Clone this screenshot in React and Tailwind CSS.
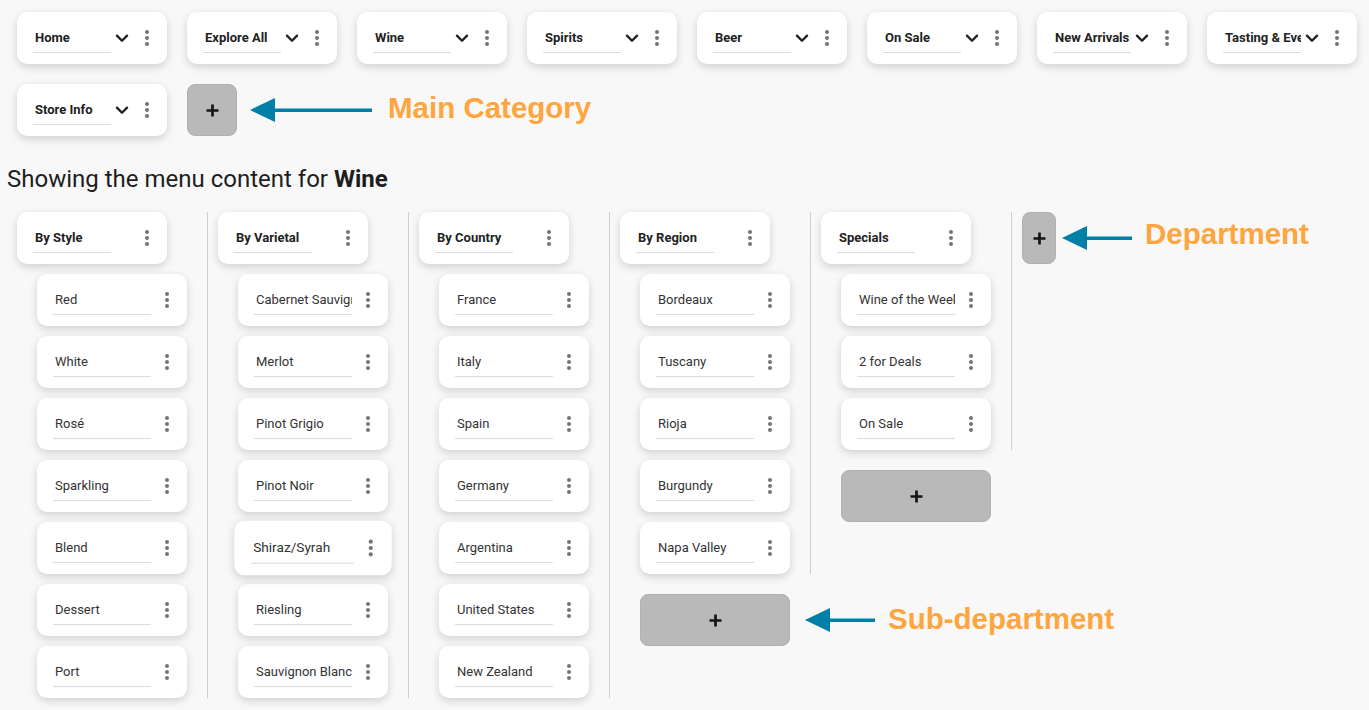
import React from 'react';

const categories = ['Home', 'Explore All', 'Wine', 'Spirits', 'Beer', 'On Sale', 'New Arrivals', 'Tasting & Events', 'Store Info'];

const departments = [
  { name: 'By Style', subs: ['Red', 'White', 'Rosé', 'Sparkling', 'Blend', 'Dessert', 'Port'] },
  { name: 'By Varietal', subs: ['Cabernet Sauvignon', 'Merlot', 'Pinot Grigio', 'Pinot Noir', 'Shiraz/Syrah', 'Riesling', 'Sauvignon Blanc'] },
  { name: 'By Country', subs: ['France', 'Italy', 'Spain', 'Germany', 'Argentina', 'United States', 'New Zealand'] },
  { name: 'By Region', subs: ['Bordeaux', 'Tuscany', 'Rioja', 'Burgundy', 'Napa Valley'], note: true },
  { name: 'Specials', subs: ['Wine of the Week', '2 for Deals', 'On Sale'] },
];

const Dots = () => (
  <div className="w-[28px] flex flex-col items-center gap-[2px]">
    <span className="w-[4px] h-[4px] rounded-full bg-[#757575]" />
    <span className="w-[4px] h-[4px] rounded-full bg-[#757575]" />
    <span className="w-[4px] h-[4px] rounded-full bg-[#757575]" />
  </div>
);

const Chevron = () => (
  <div className="w-[22px] flex justify-center">
    <svg width="22" height="22" viewBox="0 0 24 24" fill="none" stroke="#222" strokeWidth="2.6" strokeLinecap="round" strokeLinejoin="round">
      <path d="M6.5 9.5l5.5 5.5 5.5-5.5" />
    </svg>
  </div>
);

const Plus = () => (
  <svg width="13" height="13" viewBox="0 0 13 13" stroke="#151515" strokeWidth="2.7">
    <path d="M6.5 0.5v12M0.5 6.5h12" />
  </svg>
);

// underlined text input look, text clipped at the field's width
const Field = ({ text, width, bold }) => (
  <div className={`${width} h-[30px] pt-[7px] pl-[2px] border-b border-[#dcdcdc] overflow-hidden`}>
    <div className={`whitespace-nowrap leading-[16px] text-[13px] ${bold ? 'font-bold text-[#222]' : 'text-[#333]'}`}>{text}</div>
  </div>
);

const cardCls = 'w-[150px] h-[52px] bg-white rounded-[10px] shadow-[0_3px_9px_rgba(0,0,0,0.16)] flex items-center pl-[16px]';

const Arrow = ({ len }) => (
  <svg width={len} height="26" viewBox={`0 0 ${len} 26`}>
    <path d={`M24 11.5H${len}v3.5H24z`} fill="#0080a7" />
    <path d="M0 13L25 1v24z" fill="#0080a7" />
  </svg>
);

const Note = ({ children }) => (
  <span className="text-[29.5px] font-bold text-[#ffa53d] leading-none whitespace-nowrap" style={{ fontFamily: '"Liberation Sans", Arial, sans-serif' }}>
    {children}
  </span>
);

const App = () => {
  return (
    <div className="min-h-screen bg-[#f8f8f8] pl-[7px] overflow-hidden" style={{ fontFamily: 'Roboto, "Noto Sans", sans-serif' }}>
      <div className="flex flex-wrap gap-[20px] pt-[12px] pl-[10px]">
        {categories.map((c) => (
          <div key={c} className={cardCls}>
            <Field text={c} width="w-[78px]" bold />
            <Chevron />
            <Dots />
          </div>
        ))}
        <div className="flex items-center">
          <button className="w-[50px] h-[52px] rounded-[8px] bg-[#b9b9b9] border border-[#b0b0b0] flex items-center justify-center">
            <Plus />
          </button>
          <div className="ml-[13px]"><Arrow len={122} /></div>
          <div className="ml-[16px] mt-[-2px]"><Note>Main Category</Note></div>
        </div>
      </div>

      <h2 className="mt-[28px] text-[24px] leading-[30px] text-[#1e1e1e]">
        Showing the menu content for <span className="font-bold">Wine</span>
      </h2>

      <div className="mt-[18px] flex items-start">
        {departments.map((d) => (
          <div key={d.name} className="flex flex-col">
            <div className="pl-[10px] pr-[20px] border-r border-[#cfcfcf]">
              <div className={cardCls}>
                <Field text={d.name} width="w-[78px]" bold />
                <div className="w-[22px]" />
                <Dots />
              </div>
              <div className="flex flex-col gap-[10px] mt-[10px] ml-[20px]">
                {d.subs.map((s) => (
                  <div key={s} className={`${cardCls} ${s === 'Shiraz/Syrah' ? 'scale-[1.05]' : ''}`}>
                    <Field text={s} width="w-[98px]" />
                    <div className="ml-[2px]"><Dots /></div>
                  </div>
                ))}
              </div>
            </div>
            <div className="relative ml-[30px] mt-[20px] w-[150px]">
              <button className="w-[150px] h-[52px] rounded-[8px] bg-[#b9b9b9] border border-[#b0b0b0] flex items-center justify-center">
                <Plus />
              </button>
              {d.note && (
                <div className="absolute left-[165px] top-0 h-[52px] flex items-center">
                  <Arrow len={70} />
                  <div className="ml-[13px]"><Note>Sub-department</Note></div>
                </div>
              )}
            </div>
          </div>
        ))}
        <div className="pl-[10px] flex items-center">
          <button className="w-[34px] h-[52px] rounded-[8px] bg-[#b9b9b9] border border-[#b0b0b0] flex items-center justify-center">
            <Plus />
          </button>
          <div className="ml-[6px]"><Arrow len={70} /></div>
          <div className="ml-[13px] mt-[-7px]"><Note>Department</Note></div>
        </div>
      </div>
    </div>
  );
};

export default App;
